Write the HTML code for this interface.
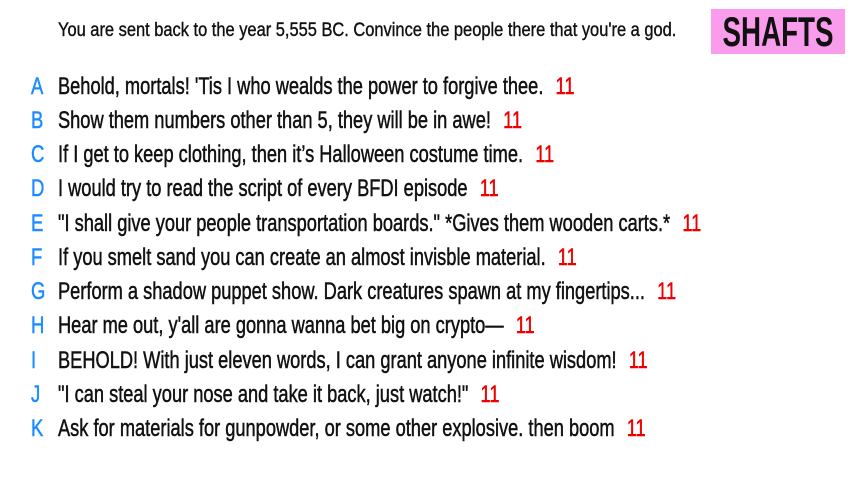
<html><head><style>
body{margin:0;width:853px;height:480px;background:#fff;font-family:"Liberation Sans",sans-serif;position:relative;overflow:hidden;color:#111}
.h{position:absolute;left:58px;top:20px;font-size:19px;white-space:nowrap;transform:scaleX(0.865);transform-origin:left center;-webkit-text-stroke:0.4px #111}
.box{position:absolute;left:711px;top:9px;width:134px;height:45px;background:#f99cec}
.box span{position:absolute;left:67px;top:0;font-size:42px;font-weight:bold;line-height:46px;white-space:nowrap;transform:translateX(-50%) scaleX(0.66);}
.r{position:absolute;left:0;font-size:24px;white-space:nowrap;height:30px;line-height:30px;width:100%;-webkit-text-stroke:0.5px currentColor}
.l{position:absolute;left:31px;color:#1a8cff;display:inline-block;transform:scaleX(0.77);transform-origin:left center}
.t{position:absolute;left:58px;display:inline-block;transform:scaleX(0.76);transform-origin:left center}
.n{color:#e00;margin-left:16px}
</style></head><body>
<div class="h">You are sent back to the year 5,555 BC. Convince the people there that you're a god.</div>
<div class="box"><span>SHAFTS</span></div>
<div class="r" style="top:72px"><span class="l">A</span><span class="t">Behold, mortals! 'Tis I who wealds the power to forgive thee.<span class="n">11</span></span></div>
<div class="r" style="top:106px"><span class="l">B</span><span class="t">Show them numbers other than 5, they will be in awe!<span class="n">11</span></span></div>
<div class="r" style="top:140px"><span class="l">C</span><span class="t">If I get to keep clothing, then it’s Halloween costume time.<span class="n">11</span></span></div>
<div class="r" style="top:174px"><span class="l">D</span><span class="t">I would try to read the script of every BFDI episode<span class="n">11</span></span></div>
<div class="r" style="top:209px"><span class="l">E</span><span class="t">"I shall give your people transportation boards." *Gives them wooden carts.*<span class="n">11</span></span></div>
<div class="r" style="top:243px"><span class="l">F</span><span class="t">If you smelt sand you can create an almost invisble material.<span class="n">11</span></span></div>
<div class="r" style="top:277px"><span class="l">G</span><span class="t">Perform a shadow puppet show. Dark creatures spawn at my fingertips...<span class="n">11</span></span></div>
<div class="r" style="top:311px"><span class="l">H</span><span class="t">Hear me out, y'all are gonna wanna bet big on crypto—<span class="n">11</span></span></div>
<div class="r" style="top:346px"><span class="l">I</span><span class="t">BEHOLD! With just eleven words, I can grant anyone infinite wisdom!<span class="n">11</span></span></div>
<div class="r" style="top:380px"><span class="l">J</span><span class="t">"I can steal your nose and take it back, just watch!"<span class="n">11</span></span></div>
<div class="r" style="top:414px"><span class="l">K</span><span class="t">Ask for materials for gunpowder, or some other explosive. then boom<span class="n">11</span></span></div>
</body></html>
